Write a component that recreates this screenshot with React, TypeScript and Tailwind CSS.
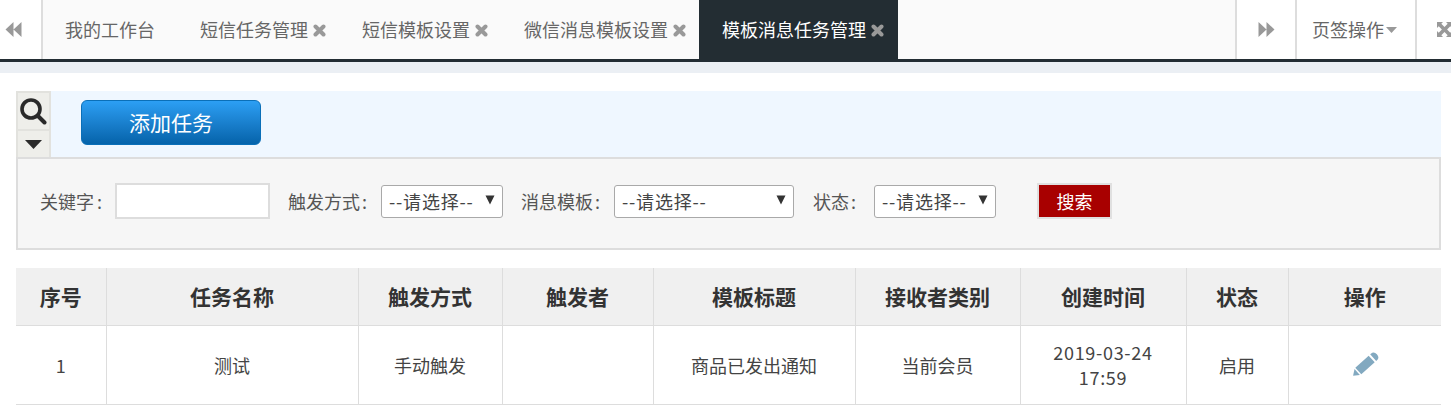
const columns = [
  { title: '序号', width: 'w-[90px]' },
  { title: '任务名称', width: 'w-[252px]' },
  { title: '触发方式', width: 'w-[144px]' },
  { title: '触发者', width: 'w-[151px]' },
  { title: '模板标题', width: 'w-[202px]' },
  { title: '接收者类别', width: 'w-[165px]' },
  { title: '创建时间', width: 'w-[166px]' },
  { title: '状态', width: 'w-[102px]' },
  { title: '操作', width: 'w-[153px]' },
];

const CloseIcon = ({ className }: { className: string }) => (
  <svg className={`mt-[2px] h-[13px] w-[13px] shrink-0 ${className}`} viewBox="0 0 13 13">
    <path d="M2.5 2.5 L10.5 10.5 M10.5 2.5 L2.5 10.5" stroke="#999" strokeWidth="4" strokeLinecap="round" fill="none" />
  </svg>
);

const DoubleArrow = ({ flip }: { flip?: boolean }) => (
  <svg className="h-[15px] w-[17px]" viewBox="0 0 17 15">
    <path d={flip ? 'M8.5 0 L0.5 7.5 L8.5 15 Z M16.5 0 L8.5 7.5 L16.5 15 Z' : 'M0.5 0 L8.5 7.5 L0.5 15 Z M8.5 0 L16.5 7.5 L8.5 15 Z'} fill="#999" />
  </svg>
);

const SelectBox = ({ width }: { width: string }) => (
  <div className={`relative h-[33px] ${width}`}>
    <select className="h-full w-full appearance-none rounded-[3px] border border-[#a9a9a9] bg-white pl-[7px] text-[18px] tracking-[0.8px] text-[#444]">
      <option>--请选择--</option>
    </select>
    <svg className="pointer-events-none absolute right-[8px] top-[10px] h-[10px] w-[10px]" viewBox="0 0 10 10">
      <path d="M0.5 0.5 H9.5 L5 9.5 Z" fill="#333" />
    </svg>
  </div>
);

const App = () => {
  return (
    <div className="h-[407px] w-[1451px] overflow-hidden bg-white font-['Noto_Sans_CJK_SC','Microsoft_YaHei',sans-serif] text-[#444]">
      {/* 页签栏 */}
      <div className="flex h-[62px] border-b-[3px] border-[#232d33] bg-[#fafafa] text-[18px] text-[#666]">
        <div className="flex w-[43px] items-center border-r-2 border-[#ddd] bg-white pl-[5px]">
          <DoubleArrow flip />
        </div>
        <div className="ml-[22px] flex items-center">我的工作台</div>
        <div className="ml-[45px] flex items-center">
          短信任务管理
          <CloseIcon className="ml-[5px]" />
        </div>
        <div className="ml-[36px] flex items-center">
          短信模板设置
          <CloseIcon className="ml-[5px]" />
        </div>
        <div className="ml-[36px] flex items-center">
          微信消息模板设置
          <CloseIcon className="ml-[5px]" />
        </div>
        <div className="ml-[13px] flex w-[199px] items-center bg-[#232d33] pl-[23px] text-white">
          模板消息任务管理
          <CloseIcon className="ml-[5px]" />
        </div>
        <div className="ml-auto flex w-[60px] items-center border-l-2 border-[#ddd] bg-white pl-[21px]">
          <DoubleArrow />
        </div>
        <div className="flex w-[120px] items-center border-l-2 border-[#ddd] bg-white pl-[15px]">
          页签操作
          <svg className="ml-[2px] h-[6px] w-[11px]" viewBox="0 0 11 6">
            <path d="M0 0 H11 L5.5 6 Z" fill="#999" />
          </svg>
        </div>
        <div className="flex w-[36px] items-center border-l-2 border-[#ddd] bg-white pl-[20px]">
          <svg className="h-[15px] w-[15px] shrink-0" viewBox="0 0 15 15">
            <path d="M0 0 H6 L4.3 1.7 L7.5 4.9 L10.7 1.7 L9 0 H15 V6 L13.3 4.3 L10.1 7.5 L13.3 10.7 L15 9 V15 H9 L10.7 13.3 L7.5 10.1 L4.3 13.3 L6 15 H0 V9 L1.7 10.7 L4.9 7.5 L1.7 4.3 L0 6 Z" fill="#999" />
          </svg>
        </div>
      </div>
      <div className="h-[11px] bg-[#ebeff4]" />

      <div className="mt-[18px] ml-[16px] w-[1425px]">
        {/* 工具栏 */}
        <div className="flex h-[66px] bg-[#eff7ff]">
          <div className="flex w-[35px] flex-col border-x-2 border-t-2 border-[#e2e2de] bg-[#eeeeea]">
            <div className="flex h-[38px] items-center justify-center border-b-2 border-[#e2e2de]">
              <svg className="mr-[2px] h-[28px] w-[28px]" viewBox="0 0 28 28">
                <circle cx="12" cy="12" r="9" stroke="#2a2a2a" strokeWidth="3.6" fill="none" />
                <path d="M19 19 L25.5 25.5" stroke="#2a2a2a" strokeWidth="4" strokeLinecap="round" />
              </svg>
            </div>
            <div className="flex flex-1 items-center justify-center">
              <svg className="h-[9px] w-[17px]" viewBox="0 0 17 9">
                <path d="M0 0 H17 L8.5 9 Z" fill="#2a2a2a" />
              </svg>
            </div>
          </div>
          <button className="mt-[9px] ml-[30px] h-[45px] w-[180px] rounded-[6px] border border-[#0a6fb8] bg-gradient-to-b from-[#2c9ff4] to-[#0563aa] text-[21px] text-white">
            添加任务
          </button>
        </div>

        {/* 搜索条件 */}
        <div className="flex h-[93px] items-center border-2 border-[#ddd] bg-[#f6f6f6] pb-[5px] pl-[22px] text-[18px] text-[#555]">
          <span className="w-[60px] whitespace-nowrap">关键字<span className="ml-[3px]">:</span></span>
          <input className="ml-[15px] h-[36px] w-[155px] border-2 border-[#ddd] bg-white" />
          <span className="ml-[18px] w-[78px] whitespace-nowrap">触发方式<span className="ml-[2px]">:</span></span>
          <div className="ml-[15px]"><SelectBox width="w-[122px]" /></div>
          <span className="ml-[18px] w-[78px] whitespace-nowrap">消息模板<span className="ml-[2px]">:</span></span>
          <div className="ml-[15px]"><SelectBox width="w-[180px]" /></div>
          <span className="ml-[19px] w-[42px] whitespace-nowrap">状态<span className="ml-[2px]">:</span></span>
          <div className="ml-[19px]"><SelectBox width="w-[122px]" /></div>
          <button className="ml-[41px] h-[36px] w-[75px] border-2 border-[#e0e0e0] bg-[#a80000] text-[18px] text-white">搜索</button>
        </div>

        {/* 任务列表 */}
        <table className="mt-[18px] w-full table-fixed border-collapse text-center">
          <thead>
            <tr className="h-[57px] bg-[#f0f0f0] text-[21px] font-bold text-[#333]">
              {columns.map((col, i) => (
                <th key={col.title} className={`${col.width} border-b border-[#ddd] ${i > 0 ? 'border-l' : ''}`}>{col.title}</th>
              ))}
            </tr>
          </thead>
          <tbody>
            <tr className="h-[79px] border-b border-[#ddd] text-[18px] text-[#444]">
              <td className="pt-[1px]">1</td>
              <td className="border-l border-[#ddd] pt-[1px]">测试</td>
              <td className="border-l border-[#ddd] pt-[1px]">手动触发</td>
              <td className="border-l border-[#ddd]"></td>
              <td className="border-l border-[#ddd] pt-[1px]">商品已发出通知</td>
              <td className="border-l border-[#ddd] pt-[1px]">当前会员</td>
              <td className="border-l border-[#ddd] pt-[1px] leading-[25px] tracking-[0.7px]">2019-03-24<br />17:59</td>
              <td className="border-l border-[#ddd] pt-[1px]">启用</td>
              <td className="border-l border-[#ddd]">
                <svg className="mx-auto h-[32px] w-[32px]" viewBox="0 0 32 32">
                  <g fill="#82a9c0" transform="rotate(-42 16 16)">
                    <path d="M0 16 L5.5 12 V20 Z" />
                    <rect x="7" y="11.5" width="18" height="9" />
                    <path d="M27 11.5 H28 Q32 11.5 32 16 Q32 20.5 28 20.5 H27 Z" />
                  </g>
                </svg>
              </td>
            </tr>
          </tbody>
        </table>
      </div>
    </div>
  );
};

export default App;
